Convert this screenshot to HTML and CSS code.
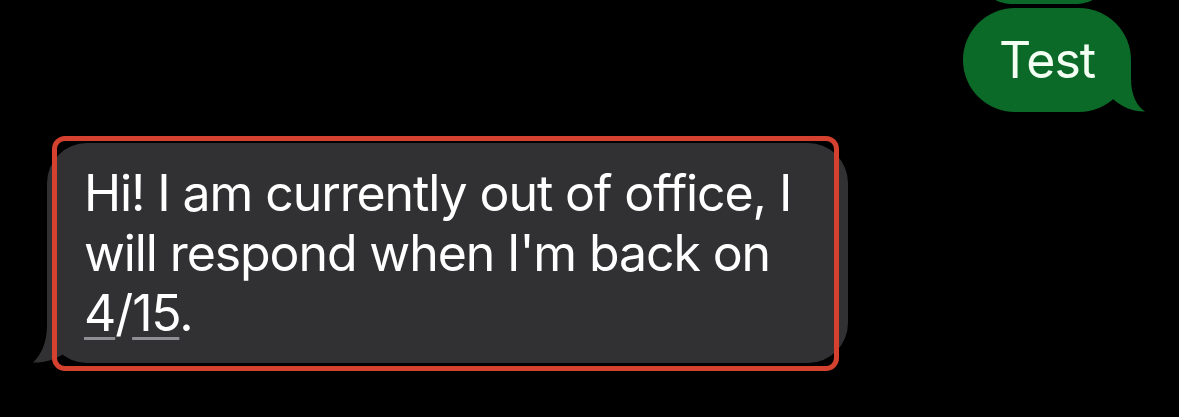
FILE: index.html
```html
<!DOCTYPE html>
<html lang="en">
<head>
    <meta charset="UTF-8">
    <meta name="viewport" content="width=device-width, initial-scale=1.0">
    <title>Messages</title>
    <link rel="stylesheet" href="styles.css">
</head>
<body>
    <div class="thread">
        <!-- Mensagem anterior (cortada no topo) -->
        <div class="row row-sent">
            <div class="bubble sent prev"></div>
        </div>

        <div class="row row-sent">
            <div class="bubble sent">
                <span class="text">Test</span>
                <svg class="tail tail-sent" width="70" height="52" viewBox="0 0 70 52">
                    <path d="M0 0 L52 0 L52 18 C52 36 58 46 66 51.5 C56 52 44 48 34 39 Z" fill="#0b6a28"/>
                </svg>
            </div>
        </div>

        <div class="row row-received">
            <div class="bubble received">
                <span class="text">Hi! I am currently out of office, I<br>
                will respond when I'm back on<br>
                <span class="link">4</span>/<span class="link">15</span>.</span>
                <svg class="tail tail-received" width="60" height="50" viewBox="0 0 60 50">
                    <path d="M56 0 L16 0 L16 12 C16 30 10 42 2 49.5 C12 50 24 47 34 40 L56 10 Z" fill="#313133"/>
                </svg>
                <!-- marcação vermelha -->
                <div class="highlight"></div>
            </div>
        </div>
    </div>
</body>
</html>
```

FILE: styles.css
```css
body {
    margin: 0;
    background: #000;
    font-family: 'Inter', 'Roboto', sans-serif;
    overflow: hidden;
}

.thread {
    display: flex;
    flex-direction: column;
    width: 1179px;
    height: 417px;
}

.row {
    display: flex;
}

.row-sent {
    justify-content: flex-end;
}

.row-received {
    justify-content: flex-start;
}

.bubble {
    position: relative;
    font-size: 50px;
    letter-spacing: -1.1px;
    white-space: nowrap;
    box-sizing: border-box;
}

.text {
    position: relative;
    z-index: 1;
}

.sent {
    background-color: #0b6a28;
    color: #f2fff2;
}

.prev {
    width: 124px;
    height: 50px;
    margin-top: -46px;
    margin-right: 73px;
    border-radius: 0 0 28px 28px;
}

.bubble.sent:not(.prev) {
    width: 168px;
    height: 104px;
    line-height: 104px;
    text-align: center;
    margin-top: 4px;
    margin-right: 48px;
    border-radius: 52px;
}

.received {
    background-color: #313133;
    color: #fff;
    width: 801px;
    margin-top: 31px;
    margin-left: 47px;
    padding: 20px 20px 20px 37px;
    line-height: 60px;
    border-radius: 40px;
}

.tail {
    position: absolute;
    bottom: 0;
    z-index: 0;
}

.tail-sent {
    right: -18px;
}

.tail-received {
    left: -16px;
}

.link {
    text-decoration: underline;
    text-decoration-color: #8e8e93;
    text-decoration-thickness: 3px;
    text-underline-offset: 6px;
}

.highlight {
    position: absolute;
    left: 5px;
    top: -7px;
    width: 787px;
    height: 235px;
    box-sizing: border-box;
    border: 5px solid #d4412f;
    border-radius: 13px;
    z-index: 2;
}
```
